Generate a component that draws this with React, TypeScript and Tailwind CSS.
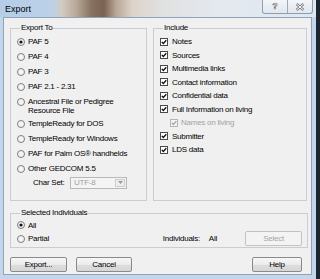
import React from 'react';

function Radio({checked}: {checked?: boolean}) {
  return (
    <svg width="8" height="8" viewBox="0 0 8 8" className="shrink-0">
      <circle cx="4" cy="4" r="3.5" fill="#f4f4f4" stroke="#7d7d7d" strokeWidth="1" />
      {checked && <circle cx="4" cy="4" r="1.6" fill="#151515" />}
    </svg>
  );
}

function Check({disabled}: {disabled?: boolean}) {
  const c = disabled ? '#a8a8a8' : '#111';
  return (
    <svg width="8" height="8" viewBox="0 0 8 8" className="shrink-0">
      <rect
        x="0.5"
        y="0.5"
        width="7"
        height="7"
        fill={disabled ? '#f4f4f4' : '#fff'}
        stroke={disabled ? '#b4b4b4' : '#4a4a4a'}
      />
      <path d="M1.8 3.9 L3.3 5.5 L6.3 2.2" fill="none" stroke={c} strokeWidth="1.3" />
    </svg>
  );
}

function RadioRow({label, checked, h}: {label: string; checked?: boolean; h: string}) {
  return (
    <div className={`flex items-center gap-[3px] ${h}`}>
      <Radio checked={checked} />
      <span>{label}</span>
    </div>
  );
}

function CheckRow({label, h, disabled}: {label: string; h: string; disabled?: boolean}) {
  return (
    <div className={`flex items-center ${h} ${disabled ? 'ml-[10px] gap-[3px] text-[#a3a3a3]' : 'gap-[4px]'}`}>
      <Check disabled={disabled} />
      <span>{label}</span>
    </div>
  );
}

function Button({label, w, disabled}: {label: string; w: string; disabled?: boolean}) {
  return (
    <div
      className={`flex h-[15px] ${w} items-center justify-center rounded-[2px] border ${
        disabled
          ? 'border-[#c2c2c2] bg-[#f3f3f3] text-[#a6a6a6]'
          : 'border-[#8a8a8a] bg-[linear-gradient(#f7f7f7,#ebebeb_50%,#dddddd_51%,#d6d6d6)]'
      }`}
    >
      {label}
    </div>
  );
}

const includes = [
  'Notes',
  'Sources',
  'Multimedia links',
  'Contact information',
  'Confidential data',
  'Full Information on living',
];

export default function App() {
  return (
    <div className="flex h-[279px] w-[320px] overflow-hidden bg-[#1c2532] font-['Liberation_Sans',Arial,sans-serif] text-[8px] leading-[9px] tracking-[-0.25px] text-black">
      <div className="flex h-[279px] w-[316px] shrink-0 flex-col bg-[#c3d6ea]">
        {/* title bar */}
        <div className="flex h-[17px] items-start bg-[linear-gradient(90deg,#b5cde8_0px,#bcd1e8_52px,#d2cbc2_62px,#b9a999_76px,#86705f_92px,#7b6353_104px,#b8a696_116px,#dcd3c9_132px,#e0e0e0_160px,#e4e9ef_220px,#dfe7f0_316px)]">
          <span className="ml-[5px] mt-[4px] text-[9px] leading-[10px] tracking-normal text-black">
            Export
          </span>
          <div className="ml-auto mr-[3px] flex h-[14px] overflow-hidden rounded-b-[3px] border border-t-0 border-[#8d9db2] bg-[linear-gradient(#f3f6f9,#e1e7ee)]">
            <div className="flex w-[25px] items-center justify-center border-r border-[#9aa9bb]">
              <span className="text-[9px] font-bold leading-[9px] tracking-normal text-[#f8f8f8] [-webkit-text-stroke:0.6px_#7a7a7a]">
                ?
              </span>
            </div>
            <div className="flex w-[24px] items-center justify-center">
              <svg width="10" height="8" viewBox="0 0 10 8">
                <path d="M1.5 1 L8.5 7 M8.5 1 L1.5 7" stroke="#808080" strokeWidth="2.6" />
                <path d="M1.5 1 L8.5 7 M8.5 1 L1.5 7" stroke="#fbfbfb" strokeWidth="1" />
              </svg>
            </div>
          </div>
        </div>

        {/* client area */}
        <div className="ml-[3px] flex h-[258px] w-[309px] flex-col border border-[#8ea4ba] bg-[#f0f0f0] pl-[6px] pr-[3px]">
          <div className="mt-[5px] flex h-[178px] gap-[6px]">
            <fieldset className="h-[178px] w-[137px] border border-[#c9cdd2] pl-[6px]">
              <legend className="ml-[3px] px-[1px] leading-[10px]">Export To</legend>
              <div className="mt-[1px] flex flex-col">
                <RadioRow label="PAF 5" checked h="h-[15px]" />
                <RadioRow label="PAF 4" h="h-[15px]" />
                <RadioRow label="PAF 3" h="h-[15px]" />
                <RadioRow label="PAF 2.1 - 2.31" h="h-[15px]" />
                <div className="flex h-[22px] items-start gap-[3px] pt-[3px]">
                  <div className="mt-[0.5px]">
                    <Radio />
                  </div>
                  <span>
                    Ancestral File or Pedigree
                    <br />
                    Resource File
                  </span>
                </div>
                <RadioRow label="TempleReady for DOS" h="h-[15px]" />
                <RadioRow label="TempleReady for Windows" h="h-[15px]" />
                <RadioRow label="PAF for Palm OS® handhelds" h="h-[15px]" />
                <RadioRow label="Other GEDCOM 5.5" h="h-[15px]" />
                <div className="flex h-[13px] items-center">
                  <span className="ml-[16px] w-[37px]">Char Set:</span>
                  <div className="flex h-[12px] w-[57px] items-stretch border border-[#b8b8b8] bg-[#f4f4f4]">
                    <span className="flex flex-1 items-center pl-[3px] text-[#a0a0a0]">UTF-8</span>
                    <div className="m-[1px] flex w-[10px] items-center justify-center border border-[#cdcdcd] bg-[#ededed]">
                      <svg width="5" height="3" viewBox="0 0 5 3">
                        <path d="M0 0 L5 0 L2.5 3 Z" fill="#9a9a9a" />
                      </svg>
                    </div>
                  </div>
                </div>
              </div>
            </fieldset>

            <fieldset className="h-[178px] w-[154px] border border-[#c9cdd2] pl-[6px]">
              <legend className="ml-[3px] px-[1px] leading-[10px]">Include</legend>
              <div className="mt-[2px] flex flex-col">
                {includes.map((label, i) => (
                  <CheckRow key={label} label={label} h={i % 2 === 0 ? 'h-[13px]' : 'h-[14px]'} />
                ))}
                <CheckRow label="Names on living" h="h-[13px]" disabled />
                <CheckRow label="Submitter" h="h-[14px]" />
                <CheckRow label="LDS data" h="h-[13px]" />
              </div>
            </fieldset>
          </div>

          <fieldset className="mt-[7px] h-[40px] w-[298px] border border-[#c9cdd2] pl-[6px] pr-[5px]">
            <legend className="ml-[3px] px-[1px] leading-[10px]">Selected Individuals</legend>
            <div className="mt-[1px] flex h-[12px] items-center gap-[3px]">
              <Radio checked />
              <span>All</span>
            </div>
            <div className="flex h-[15px] items-center">
              <Radio />
              <span className="ml-[3px]">Partial</span>
              <span className="ml-auto">Individuals:</span>
              <span className="ml-[9px]">All</span>
              <div className="ml-[28px]">
                <Button label="Select" w="w-[57px]" disabled />
              </div>
            </div>
          </fieldset>

          <div className="mt-[9px] flex items-center pr-[6px]">
            <Button label="Export..." w="w-[57px]" />
            <div className="ml-[9px]">
              <Button label="Cancel" w="w-[56px]" />
            </div>
            <div className="ml-auto">
              <Button label="Help" w="w-[50px]" />
            </div>
          </div>
        </div>
      </div>
    </div>
  );
}
